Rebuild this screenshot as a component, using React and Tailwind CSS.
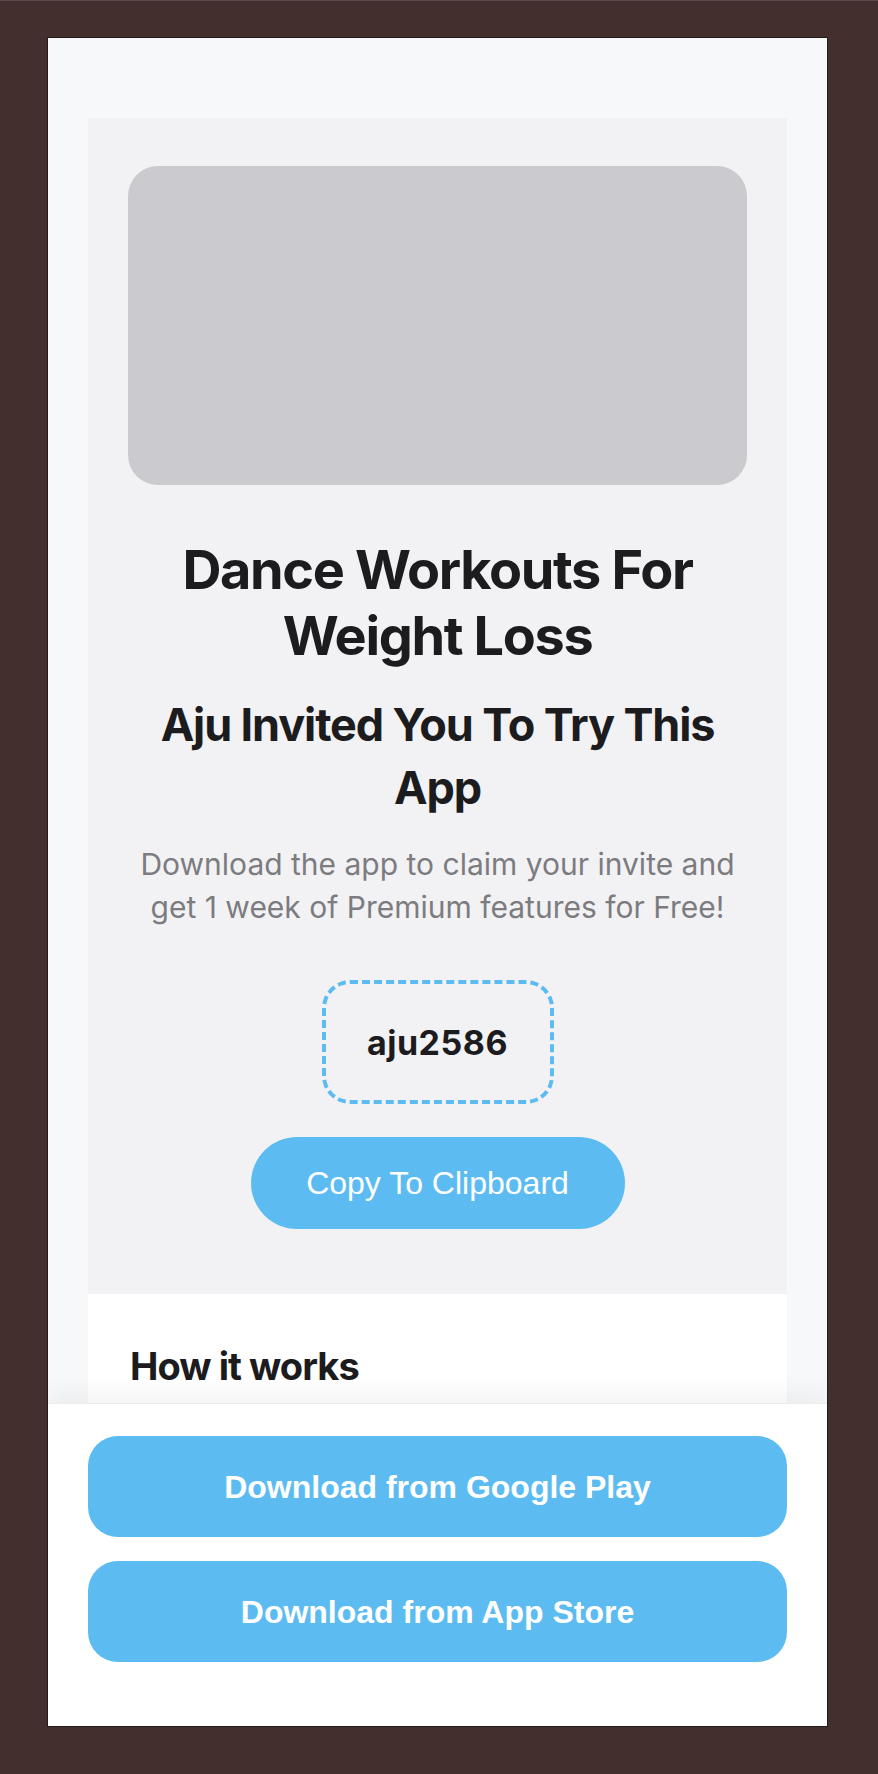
import { useState } from "react";

const inter = { fontFamily: "Inter, 'Noto Sans', sans-serif" };

function CodeCard({ code }) {
  const [copied, setCopied] = useState(false);

  const handleCopy = () => {
    navigator.clipboard?.writeText(code).catch(() => {});
    setCopied(true);
  };

  return (
    <div className="flex flex-col items-center">
      <div className="w-[232px] h-[124px] rounded-[28px] border-[4px] border-dashed border-[#5cbcf1] flex items-center justify-center">
        <span className="text-[34px] font-bold tracking-[0.5px] text-[#1c1c1e]" style={inter}>{code}</span>
      </div>
      <button
        onClick={handleCopy}
        className="mt-[33px] w-[374px] h-[92px] rounded-full bg-[#5cbcf1] text-white text-[32px] font-['Liberation_Sans',Arial,sans-serif]"
      >
        {copied ? "Copied!" : "Copy To Clipboard"}
      </button>
    </div>
  );
}

export default function App() {
  return (
    <div className="min-h-[1774px] bg-[#432f2e] border-t border-[#5a4b4b] pt-[36px]">
      <div className="ml-[47px] w-[781px] h-[1690px] bg-[#f7f8fa] border border-[#221c1c] flex flex-col overflow-hidden" style={inter}>
        <div className="flex-1 overflow-hidden px-[40px] pt-[80px]">
          <div className="bg-[#f2f2f4] px-[40px] pt-[48px] pb-[65px] flex flex-col items-center text-center">
            <div className="w-full h-[319px] rounded-[30px] bg-[#cbcbcf]" />
            <h1 className="mt-[52px] text-[54px] leading-[66px] font-bold tracking-tight text-[#1c1c1e] px-[30px]">
              Dance Workouts For Weight Loss
            </h1>
            <h2 className="mt-[24px] text-[45px] leading-[63px] font-bold tracking-tight text-[#1c1c1e]">
              Aju Invited You To Try This App
            </h2>
            <p className="mt-[24px] text-[30px] leading-[43px] text-[#7c7c80]">
              Download the app to claim your invite and get 1 week of Premium features for Free!
            </p>
            <div className="mt-[51px]">
              <CodeCard code="aju2586" />
            </div>
          </div>
          <div className="bg-white px-[42px] pt-[48px] pb-[160px]">
            <h3 className="text-[38px] leading-[49px] font-bold tracking-tight text-[#1c1c1e]">How it works</h3>
          </div>
        </div>
        <div className="relative z-10 bg-white border-t border-[#ececee] shadow-[0_-10px_24px_rgba(0,0,0,0.05)] px-[40px] pt-[32px] pb-[64px] flex flex-col gap-[24px] font-['Liberation_Sans',Arial,sans-serif]">
          <button className="h-[101px] rounded-[30px] bg-[#5cbcf1] text-white text-[32px] font-bold">
            Download from Google Play
          </button>
          <button className="h-[101px] rounded-[30px] bg-[#5cbcf1] text-white text-[32px] font-bold">
            Download from App Store
          </button>
        </div>
      </div>
    </div>
  );
}
